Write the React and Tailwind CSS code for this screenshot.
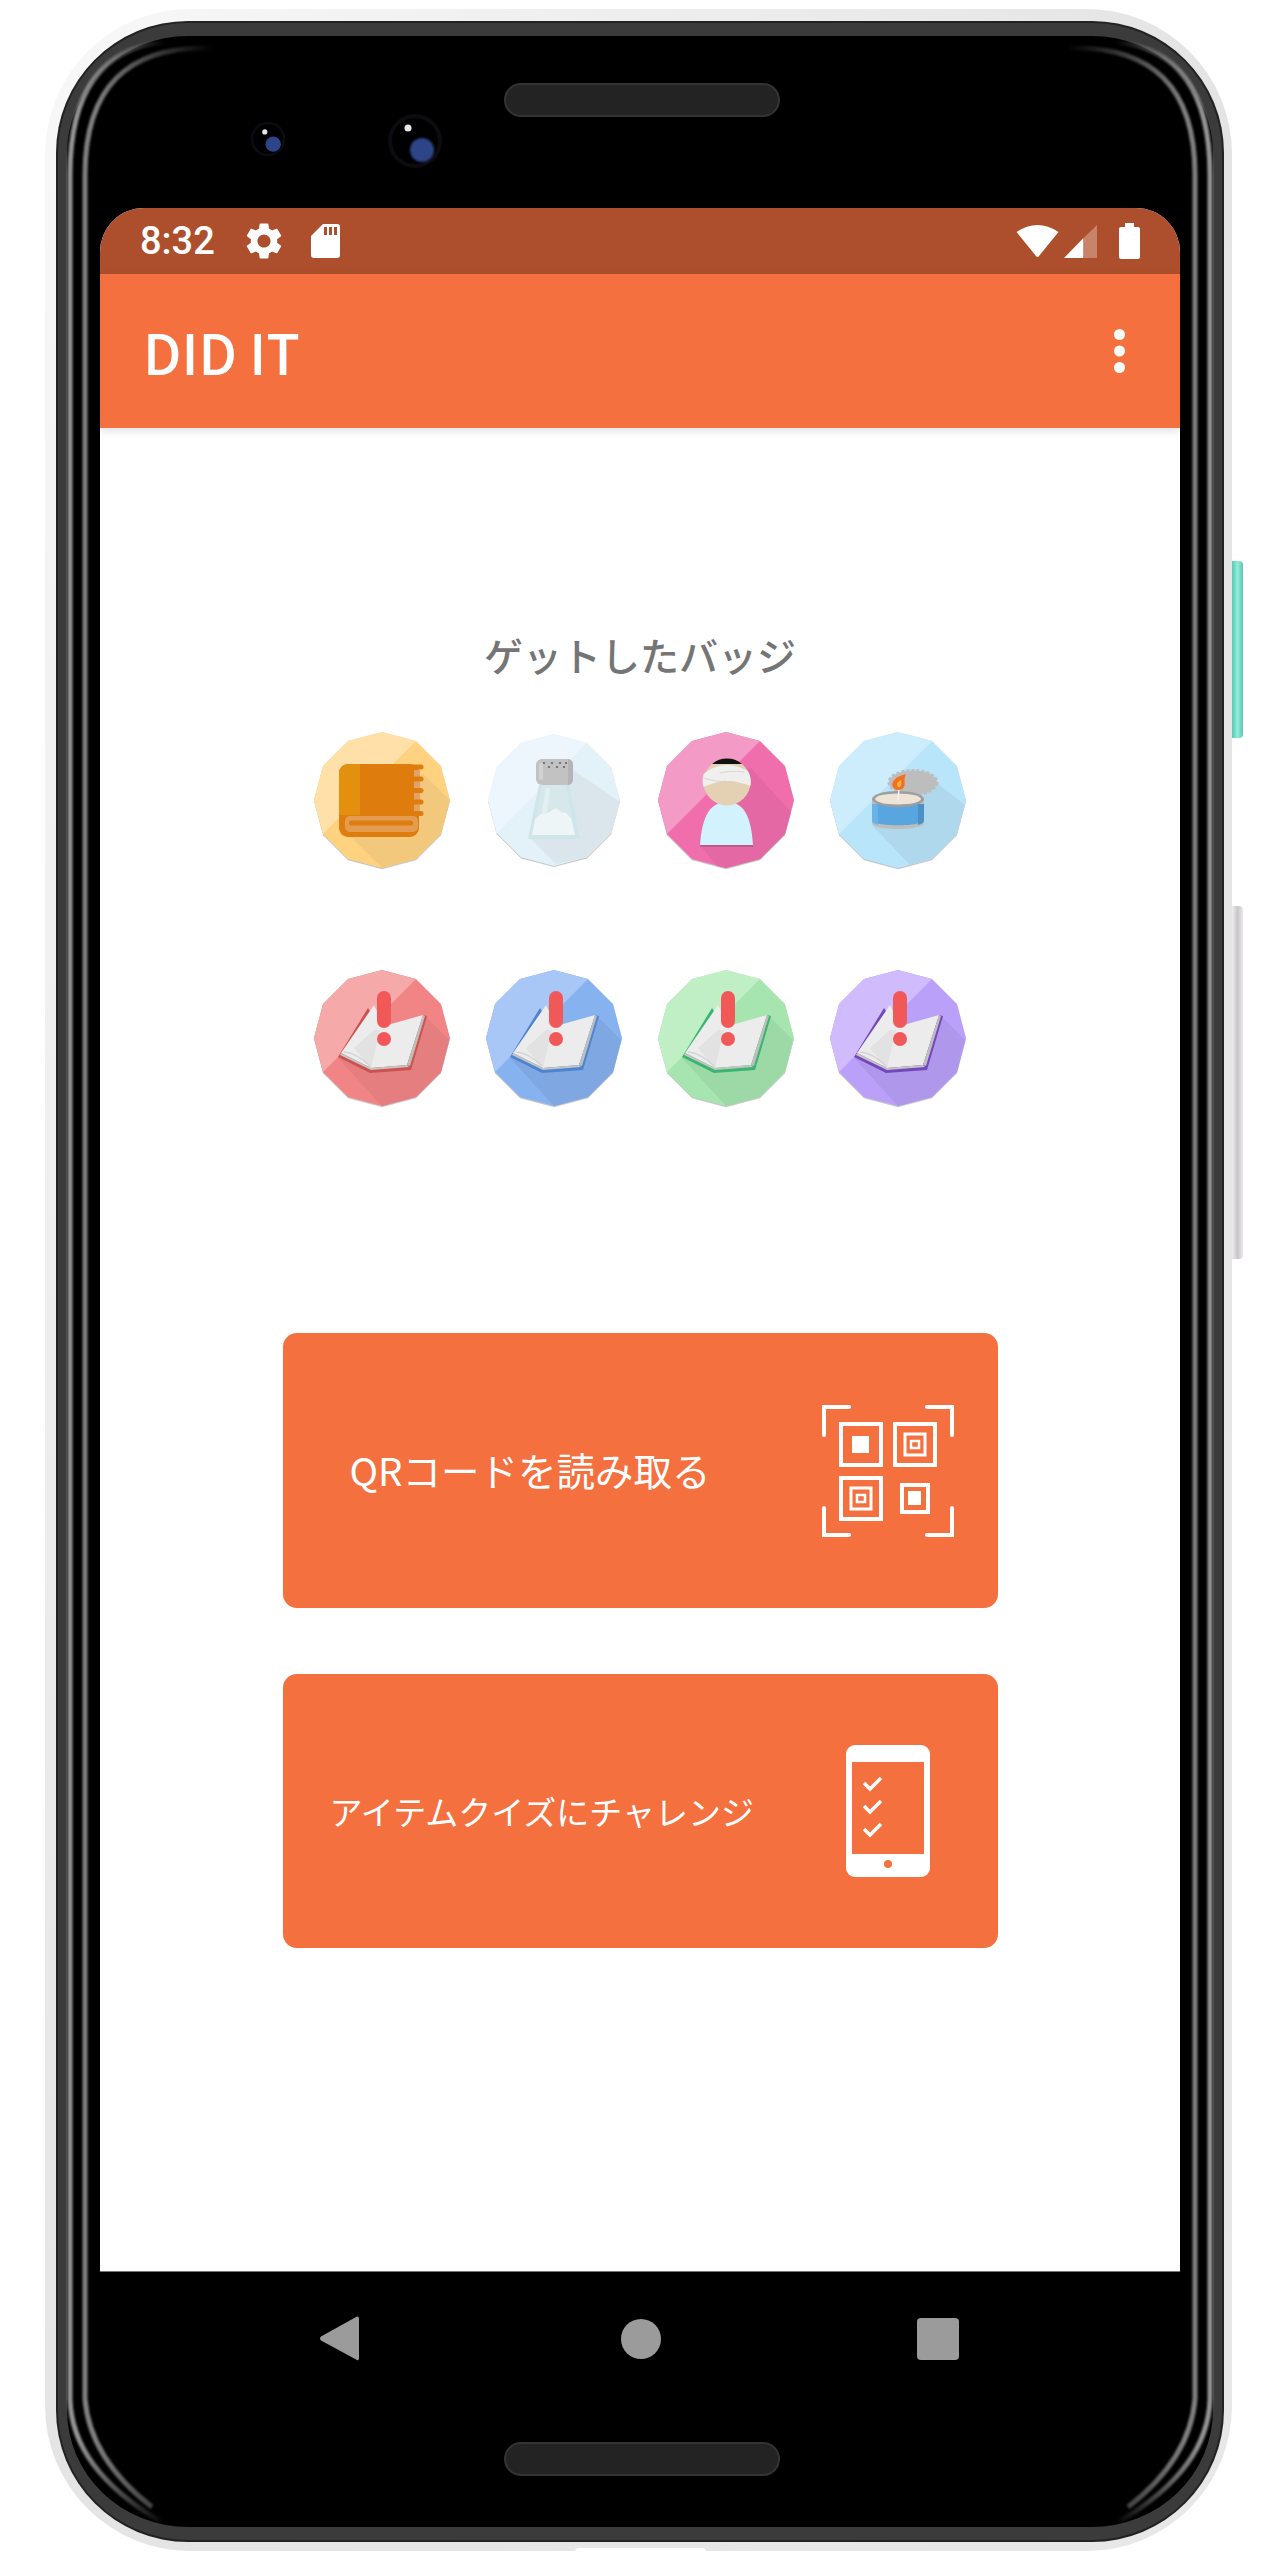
// DID IT アプリのスクリーンショット（端末フレーム付き）
const DODECAGON = '0,-68 34,-59 59,-34 68,0 59,34 34,59 0,68 -34,59 -59,34 -68,0 -59,-34 -34,-59';
const LIGHT_FACET = '-59,34 -68,0 -59,-34 -34,-59 0,-68 34,-59';

function Badge({ light, base, dark, shadow, scale = 1, children }) {
  return (
    <svg width="140" height="140" viewBox="-70 -70 140 140">
      <g transform={`scale(${scale})`}>
        <polygon points={DODECAGON} transform="translate(0,1.2)" fill="#000" opacity="0.22" />
        <polygon points={DODECAGON} fill={base} />
        <polygon points={LIGHT_FACET} fill={light} />
        <polygon points={shadow} fill={dark} />
      </g>
      {children}
    </svg>
  );
}

function NoteBook() {
  return (
    <g>
      <rect x="-43" y="-36" width="80" height="73" rx="9" fill="#DF7C0E" />
      <path d="M-34 -36 H-22 V15 H-43 V-27 A9 9 0 0 1 -34 -36 Z" fill="#E3900F" />
      <rect x="32" y="-30" width="6" height="46" fill="#E3A265" />
      {[-33, -21, -9.5, 2, 13.5].map((y) => (
        <rect key={y} x="24" y={y - 2.5} width="17.5" height="5" rx="2.5" fill="#DF7C0E" />
      ))}
      <rect x="-37" y="16" width="73" height="16" rx="5" fill="#E39C50" />
      <rect x="-33" y="20.5" width="64" height="5" rx="2" fill="#DF7C0E" />
    </g>
  );
}

function SaltShaker() {
  return (
    <g>
      <path d="M-15 -15 H15 L26 39 H-26 Z" fill="#CFE5E9" />
      <path d="M-12 -15 H12 L21 35 H-21 Z" fill="#D6E8EC" />
      <path d="M-8 -12 H-4 L-9 30 H-15 Z" fill="#E3F0F3" />
      <path d="M-22 35 L-19 19 L-13 14 L-8 14 L-3 11 L2 8 L7 12 L12 13 L17 18 L21 35 Z" fill="#EDF5F7" />
      <rect x="-18" y="-41" width="37" height="26" rx="6" fill="#C2C2C2" />
      <path d="M14 -41 A6 6 0 0 1 19 -35 V-21 A6 6 0 0 1 14 -15 Z" fill="#B4B4B4" />
      <rect x="-15" y="-37" width="4" height="17" rx="2" fill="#D2D2D2" />
      {[-8, 0, 8, 14].map((x) => (
        <circle key={x} cx={x - 2} cy="-37" r="1.1" fill="#666" />
      ))}
      {[-5, 3, 10].map((x) => (
        <circle key={x} cx={x} cy="-33" r="1.1" fill="#666" />
      ))}
    </g>
  );
}

function Patient() {
  return (
    <g>
      <path d="M-26 45.5 C-24 16 -16 2 1 2 C18 2 25 16 27 45.5 Z" fill="#000" opacity="0.18" transform="translate(0,1.2)" />
      <path d="M-26 45 C-24 16 -16 2 1 2 C18 2 25 16 27 45 Z" fill="#D2F2FE" />
      <circle cx="1" cy="-18" r="23.5" fill="#E4D0B2" />
      <path d="M-14 -36 A23.5 23.5 0 0 1 16 -36 Z" fill="#111" />
      <path d="M-22.5 -26 A23.5 23.5 0 0 0 -22.5 -13 C-14 -17 -4 -19 2 -19 C9 -19 17 -17 24.5 -14 A23.5 23.5 0 0 0 22 -29 C14 -33 8 -35 1 -35 C-8 -35 -17 -31 -22.5 -26 Z" fill="#EFEFEF" />
      <path d="M-22 -22 C-12 -19 -6 -18 0 -19 M-6 -27 C2 -29 10 -29 18 -28" stroke="#CFCFCF" strokeWidth="0.8" fill="none" />
    </g>
  );
}

function TunaCandle() {
  return (
    <g>
      <ellipse cx="15" cy="-17.5" rx="24" ry="12" fill="#BDBDBD" stroke="#BDBDBD" strokeWidth="3" strokeDasharray="3 2" />
      <path d="M-26 -1 V23 C-26 31 26 31 26 23 V-1 Z" fill="#BDBDBD" />
      <path d="M-26 4 V20 C-26 27 26 27 26 20 V4 Z" fill="#58A6E0" />
      <path d="M-26 4 V20 C-26 23 -23 24 -20 25 V4 Z" fill="#6AB1E5" />
      <path d="M26 4 V20 C26 23 23 24 20 25 V4 Z" fill="#4D90C8" />
      <ellipse cx="0" cy="-1" rx="26" ry="8" fill="#9E9E9E" />
      <ellipse cx="0" cy="-1" rx="23" ry="5.5" fill="#EDE3D6" />
      <path d="M1 -11 L0 0" stroke="#F5F5F5" strokeWidth="1.4" />
      <path d="M8 -26 C-2 -24 -7 -18 -5.5 -14 C-4 -9 4 -9 6 -13 C8 -17 5 -20 8 -26 Z" fill="#F4701F" />
      <path d="M3 -20 C-1 -18 -2 -15 0 -13 C3 -12 4 -15 3 -20 Z" fill="#FBB040" />
    </g>
  );
}

function OpenBook({ cover }) {
  return (
    <g>
      <polygon points="-14,-30 -44,19 -12,35 29,32 45,-22 41,-23 20,20 -20,20 -12,-27" fill={cover} />
      <polygon points="-8,-33 2,-12 41,-23 25,27 -11,30 -41,15" fill="#ECECEC" />
      <polygon points="41,-23 43,-22 28,28 25,27" fill="#BEBEBE" />
      <polygon points="-41,15 -11,30 25,27 27,29 -11,32 -42,17" fill="#C4C4C4" />
      <polygon points="-8,-8 -2,-8 -11,30 -28,10" fill="#E2E2E2" />
      <path d="M-38 14 C-26 15 -18 22 -12 28" stroke="#D4D4D4" strokeWidth="1.5" fill="none" />
      <rect x="-5" y="-47" width="14" height="37" rx="7" fill="#F15959" />
      <circle cx="2" cy="1" r="7" fill="#F15959" />
    </g>
  );
}

function QrIcon() {
  return (
    <svg width="132" height="132" viewBox="0 0 132 132" fill="none" stroke="#fff">
      <g strokeWidth="4" strokeLinecap="round">
        <path d="M2 30 V2 H27" />
        <path d="M105 2 H130 V30" />
        <path d="M2 103 V130 H27" />
        <path d="M105 130 H130 V103" />
      </g>
      <rect x="19" y="19" width="40" height="41" strokeWidth="4" />
      <rect x="30" y="31" width="17" height="17" fill="#fff" stroke="none" />
      <rect x="73" y="19" width="40" height="41" strokeWidth="4" />
      <rect x="83" y="29" width="20" height="21" strokeWidth="3" />
      <rect x="89" y="36" width="8" height="7" strokeWidth="2.5" />
      <rect x="19" y="73" width="40" height="41" strokeWidth="4" />
      <rect x="29" y="83" width="20" height="21" strokeWidth="3" />
      <rect x="35" y="90" width="8" height="7" strokeWidth="2.5" />
      <rect x="80" y="80" width="26" height="27" strokeWidth="4" />
      <rect x="86" y="86" width="13" height="14" fill="#fff" stroke="none" />
    </svg>
  );
}

function QuizPhoneIcon() {
  return (
    <svg width="84" height="132" viewBox="0 0 84 132">
      <rect width="84" height="132" rx="9" fill="#fff" />
      <rect x="6" y="17" width="72" height="92" fill="#F4703F" />
      <circle cx="42" cy="119" r="4" fill="#F4703F" />
      {[33, 56, 79].map((y) => (
        <path key={y} d={`M18 ${y + 5} L24 ${y + 11} L35 ${y}`} stroke="#fff" strokeWidth="3.5" fill="none" />
      ))}
    </svg>
  );
}

function FrameHighlights() {
  return (
    <svg className="absolute left-0 top-0 pointer-events-none" width="1280" height="2577" viewBox="0 0 1280 2577" fill="none">
      <defs>
        <linearGradient id="fadeOuter" gradientUnits="userSpaceOnUse" x1="78" y1="0" x2="165" y2="0">
          <stop offset="0" stopColor="#949494" />
          <stop offset="1" stopColor="#949494" stopOpacity="0" />
        </linearGradient>
        <linearGradient id="fadeInner" gradientUnits="userSpaceOnUse" x1="95" y1="0" x2="212" y2="0">
          <stop offset="0" stopColor="#808080" />
          <stop offset="1" stopColor="#808080" stopOpacity="0" />
        </linearGradient>
        <filter id="soften">
          <feGaussianBlur stdDeviation="1.2" />
        </filter>
      </defs>
      {['', 'translate(1280,0) scale(-1,1)'].map((t) => (
        <g key={t} transform={t} filter="url(#soften)">
          <path d="M165 42 Q70 50 70 175 V2400 Q72 2470 160 2522" stroke="url(#fadeOuter)" strokeWidth="5" />
          <path d="M212 48 Q85 44 85 175 V2400 Q90 2460 152 2508" stroke="url(#fadeInner)" strokeWidth="5" />
        </g>
      ))}
    </svg>
  );
}

function Camera({ size, lensX, lensY, glintX, glintY, glint }) {
  return (
    <svg width={size} height={size} viewBox="-28 -28 56 56">
      <circle r="27" fill="#0b0b10" />
      <circle r="23" fill="#000" />
      <circle cx={lensX} cy={lensY} r="12" fill="#2d4488" className="blur-[1px]" />
      <circle cx={glintX} cy={glintY} r={glint} fill="#e6e6e6" className="blur-[0.5px]" />
    </svg>
  );
}

function Speaker() {
  return <div className="w-[276px] h-[34px] rounded-[17px] bg-[#232323] border-2 border-[#333]" />;
}

export default function App() {
  return (
    <div className="relative w-[1280px] h-[2577px] bg-white pl-[45px] pt-[9px] font-['Noto_Sans_CJK_JP',sans-serif] overflow-hidden">
      {/* 影 */}
      <div className="w-[1187px] h-[2543px] rounded-[145px] bg-linear-to-br from-[#f8f8f8] via-[#e4e4e4] to-[#e8e8e8] pl-[11px] pr-[8px] pt-[12px] pb-[9px]">
        {/* 端末本体 */}
        <div className="h-full rounded-[132px] bg-[#222] p-[2px]">
          <div className="h-full rounded-[130px] bg-black border-x-[9px] border-t-[13px] border-b-[13px] border-[#3b3b3b] px-[33px] flex flex-col">
            {/* 上部ベゼル */}
            <div className="h-[172px] shrink-0 flex items-start">
              <div className="ml-[150px] mt-[85px]">
                <Camera size={36} lensX={8} lensY={8} glintX={-5} glintY={-11} glint={4} />
              </div>
              <div className="ml-[101px] mt-[77px]">
                <Camera size={56} lensX={7} lensY={9} glintX={-7} glintY={-13} glint={3.5} />
              </div>
              <div className="ml-[61px] mt-[47px]">
                <Speaker />
              </div>
            </div>

            {/* 画面 */}
            <div className="bg-white rounded-t-[44px] overflow-hidden h-[2065px] shrink-0 flex flex-col border-b border-[#777]">
              <div className="h-[66px] shrink-0 bg-[#AD4F2C] flex items-center justify-between pl-[40px] pr-[40px] text-white">
                <div className="flex items-center">
                  <span className="w-[73px] font-['Roboto',sans-serif] font-medium text-[38px] leading-none">8:32</span>
                  <svg className="ml-[29px]" width="44" height="44" viewBox="0 0 24 24" fill="#fff">
                    <path d="M19.14 12.94c.04-.3.06-.61.06-.94 0-.32-.02-.64-.07-.94l2.03-1.58a.49.49 0 0 0 .12-.61l-1.92-3.32a.488.488 0 0 0-.59-.22l-2.39.96c-.5-.38-1.03-.7-1.62-.94l-.36-2.54a.484.484 0 0 0-.48-.41h-3.84c-.24 0-.43.17-.47.41l-.36 2.54c-.59.24-1.13.57-1.62.94l-2.39-.96c-.22-.08-.47 0-.59.22L2.74 8.87c-.12.21-.08.47.12.61l2.03 1.58c-.05.3-.09.63-.09.94s.02.64.07.94l-2.03 1.58a.49.49 0 0 0-.12.61l1.92 3.32c.12.22.37.29.59.22l2.39-.96c.5.38 1.03.7 1.62.94l.36 2.54c.05.24.24.41.48.41h3.84c.24 0 .44-.17.47-.41l.36-2.54c.59-.24 1.13-.56 1.62-.94l2.39.96c.22.08.47 0 .59-.22l1.92-3.32c.12-.22.07-.47-.12-.61l-2.01-1.58zM12 15.6c-1.98 0-3.6-1.62-3.6-3.6s1.62-3.6 3.6-3.6 3.6 1.62 3.6 3.6-1.62 3.6-3.6 3.6z" />
                  </svg>
                  <svg className="ml-[25px]" width="29" height="34" viewBox="0 0 29 34">
                    <path d="M12 0 H26 A3 3 0 0 1 29 3 V31 A3 3 0 0 1 26 34 H3 A3 3 0 0 1 0 31 V12 Z" fill="#fff" />
                    <rect x="13" y="3" width="3" height="8" fill="#AD4F2C" />
                    <rect x="18" y="3" width="3" height="8" fill="#AD4F2C" />
                    <rect x="23" y="3" width="3" height="8" fill="#AD4F2C" />
                  </svg>
                </div>
                <div className="flex items-center">
                  <svg width="43" height="33" viewBox="0 0 43 33">
                    <path d="M0.5 7 Q21.5 -7 42.5 7 L23 31 Q21.5 33 20 31 Z" fill="#fff" />
                  </svg>
                  <svg className="ml-[5px]" width="34" height="33" viewBox="0 0 34 33">
                    <path d="M0 33 L19.5 13 V33 Z" fill="#fff" />
                    <path d="M19.5 13 L33 0 V33 H19.5 Z" fill="#C8836B" />
                  </svg>
                  <svg className="ml-[21px]" width="21" height="36" viewBox="0 0 21 36">
                    <path d="M6 0 H15 V4 H19 A2 2 0 0 1 21 6 V34 A2 2 0 0 1 19 36 H2 A2 2 0 0 1 0 34 V6 A2 2 0 0 1 2 4 H6 Z" fill="#fff" />
                  </svg>
                </div>
              </div>

              <div className="relative h-[154px] shrink-0 bg-[#F4703F] shadow-[0_3px_8px_rgba(0,0,0,0.12)] flex items-center justify-between pl-[43px] pr-[55px]">
                <span className="text-white font-medium text-[55px] leading-none">DID IT</span>
                <svg width="11" height="44" viewBox="0 0 11 44" fill="#fff">
                  <circle cx="5.5" cy="5.5" r="5.5" />
                  <circle cx="5.5" cy="22" r="5.5" />
                  <circle cx="5.5" cy="38.5" r="5.5" />
                </svg>
              </div>

              <main className="flex-1 flex flex-col items-center pt-[202px]">
                <h2 className="h-[48px] leading-[48px] text-[39px] font-medium text-[#757575]">ゲットしたバッジ</h2>
                <div className="mt-[52px] grid grid-cols-4 gap-x-[32px] gap-y-[98px]">
                  <Badge light="#FEE0A8" base="#FFD27F" dark="#F2C97C" shadow="41,-26 68,0 59,34 34,59 0,68 -34,34">
                    <NoteBook />
                  </Badge>
                  <Badge light="#EDF6FC" base="#E3F1F9" dark="#DAE5EC" scale={0.97} shadow="18,-32 68,2 59,34 34,59 2,66 -25,39">
                    <SaltShaker />
                  </Badge>
                  <Badge light="#F49AC6" base="#F06EAC" dark="#E368A3" shadow="24,-33 65,12 59,34 34,59 0,68 -9,66 -26,45">
                    <Patient />
                  </Badge>
                  <Badge light="#CDEDFD" base="#B8E5FA" dark="#AFD8EC" shadow="40,-16 67,5 59,34 34,59 12,65 -26,25">
                    <TunaCandle />
                  </Badge>
                  <Badge light="#F5A9A9" base="#F18585" dark="#E57E7E" shadow="42,-23 67,2 59,34 34,59 0,68 -44,20">
                    <OpenBook cover="#CE5151" />
                  </Badge>
                  <Badge light="#A8C7F7" base="#87B2F0" dark="#7FA7E2" shadow="42,-23 67,2 59,34 34,59 0,68 -44,20">
                    <OpenBook cover="#4D84D1" />
                  </Badge>
                  <Badge light="#C0EFC6" base="#A6E5AF" dark="#9DD9A6" shadow="42,-23 67,2 59,34 34,59 0,68 -44,20">
                    <OpenBook cover="#38B56E" />
                  </Badge>
                  <Badge light="#D0BBFD" base="#BAA0F9" dark="#AF97EB" shadow="42,-23 67,2 59,34 34,59 0,68 -44,20">
                    <OpenBook cover="#7448BC" />
                  </Badge>
                </div>

                <button className="mt-[226px] w-[715px] h-[275px] shrink-0 rounded-[14px] bg-[#F4703F] flex items-center justify-between pl-[67px] pr-[44px] text-white">
                  <span className="text-[38.5px] leading-none pb-[3px]">QRコードを読み取る</span>
                  <QrIcon />
                </button>
                <button className="mt-[66px] w-[715px] h-[274px] shrink-0 rounded-[14px] bg-[#F4703F] flex items-center justify-between pl-[47px] pr-[68px] text-white">
                  <span className="text-[33px] leading-none">アイテムクイズにチャレンジ</span>
                  <QuizPhoneIcon />
                </button>
              </main>
            </div>

            {/* ナビゲーションバー */}
            <div className="flex-1 flex flex-col items-center pt-[44px]">
              <div className="w-full h-[45px] flex items-center pl-[220px]">
                <svg width="39" height="45" viewBox="0 0 39 45">
                  <path d="M37 0.5 Q39 0 39 3 V42 Q39 45 37 44 L1 24.5 Q-1 22.5 1 20.5 Z" fill="#9B9B9B" />
                </svg>
                <div className="ml-[262px] w-[40px] h-[40px] rounded-full bg-[#9B9B9B]" />
                <div className="ml-[256px] w-[42px] h-[42px] rounded-[4px] bg-[#9B9B9B]" />
              </div>
              <div className="mt-[81px] ml-[3px]">
                <Speaker />
              </div>
            </div>
          </div>
        </div>
      </div>

      <FrameHighlights />

      {/* 側面ボタン */}
      <div className="absolute left-[1232px] top-[561px] w-[11px] h-[177px] rounded-r-[4px] bg-linear-to-r from-[#5fc4b0] via-[#8ef0dc] to-[#5fc4b0]" />
      <div className="absolute left-[1232px] top-[906px] w-[11px] h-[353px] rounded-r-[4px] bg-linear-to-r from-[#eeeeee] via-[#c9c6c9] to-[#ebe9eb]" />
      <div className="absolute left-[575px] top-[2549px] w-[131px] h-[4px] rounded-t-[4px] bg-white" />
    </div>
  );
}
